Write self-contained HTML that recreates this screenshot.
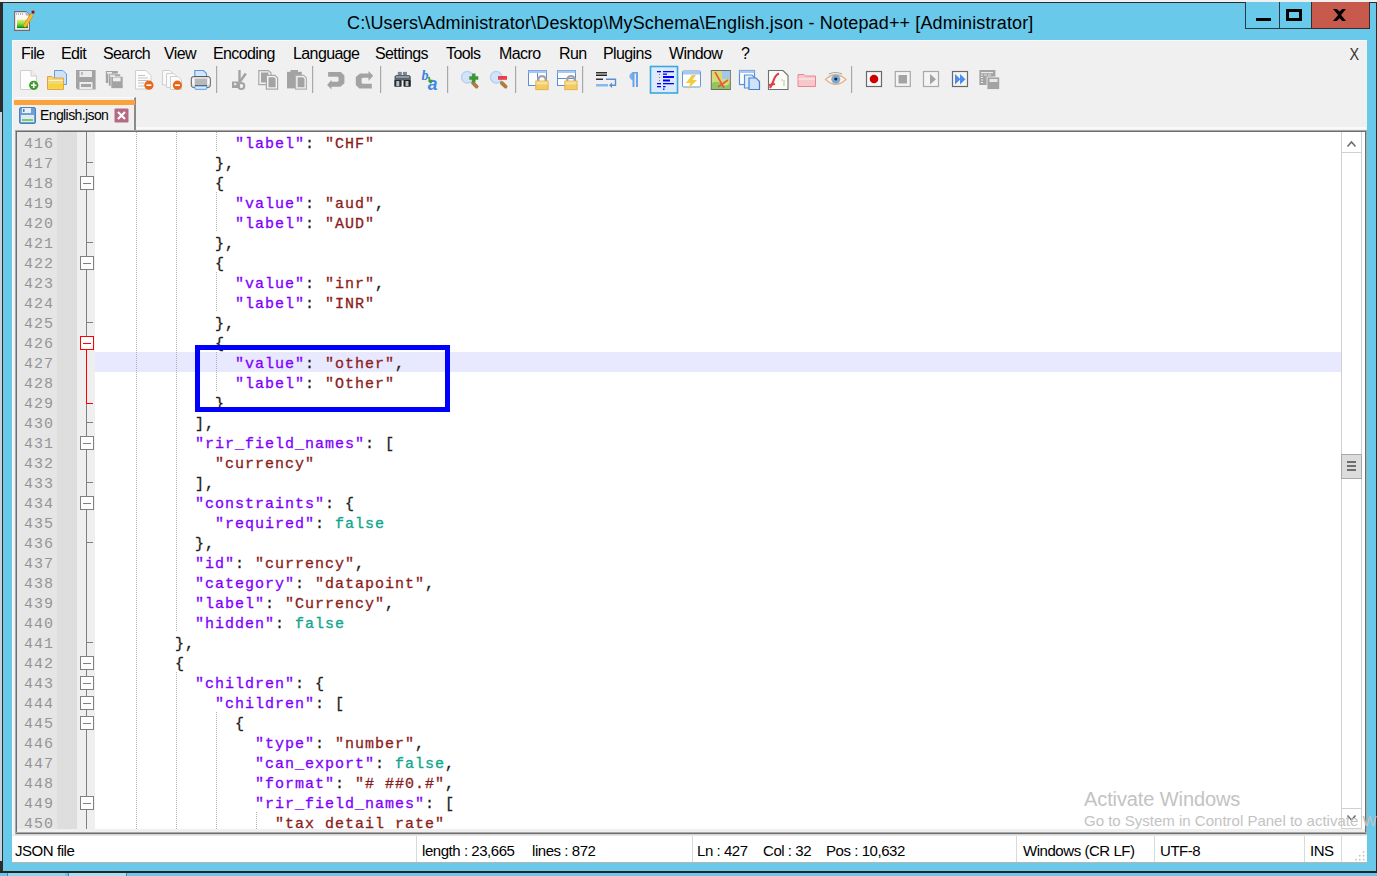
<!DOCTYPE html>
<html><head><meta charset="utf-8"><style>
*{margin:0;padding:0;box-sizing:border-box}
html,body{width:1377px;height:876px;overflow:hidden;background:#f0f0f0;position:relative;font-family:"Liberation Sans",sans-serif}
.a{position:absolute}
.t{position:absolute;white-space:nowrap;color:#000}
.mi{position:absolute;top:45px;font-size:16px;letter-spacing:-0.6px;color:#000;white-space:nowrap}
.ln{position:absolute;left:24px;height:20px;line-height:20px;font-family:"Liberation Mono",monospace;font-size:15px;letter-spacing:1px;color:#959595;padding-top:3px}
.cl{position:absolute;height:20px;line-height:20px;font-family:"Liberation Mono",monospace;font-size:15px;letter-spacing:1px;white-space:pre;color:#202020;padding-top:3px;-webkit-text-stroke:0.3px currentColor}
.k{color:#8000ff}
.s{color:#8a1c1c}
.f{color:#0ea58c}
.st{position:absolute;top:842px;font-size:15px;letter-spacing:-0.45px;color:#000;white-space:nowrap}
.sep{position:absolute;top:836px;width:1px;height:26px;background:#dadada}
.g{position:absolute;width:1px;background:repeating-linear-gradient(180deg,#b0b0b0 0 1px,transparent 1px 2px)}
</style></head><body>
<div class="a" style="left:2px;top:2px;width:1375px;height:871px;background:#68c9ea;border:1px solid #2b2b2b"></div>
<div class="a" style="left:0;top:2px;width:3px;height:110px;background:#2b2b2b"></div>
<div class="a" style="left:0;top:112px;width:2px;height:749px;background:#c9d3de"></div>
<div class="a" style="left:0;top:861px;width:3px;height:12px;background:#2b2b2b"></div>
<div class="a" style="left:0;top:871px;width:1377px;height:2px;background:#2b2424"></div>
<div class="a" style="left:2px;top:112px;width:1px;height:761px;background:#2b2b2b"></div>
<div class="a" style="left:0;top:873px;width:1377px;height:3px;background:#68c9ea"></div>
<div class="a" style="left:7px;top:873px;width:58px;height:3px;background:#8fd6ef;border-left:1px solid #3a8fb0"></div>
<div class="a" style="left:68px;top:873px;width:59px;height:3px;background:#a5e0f3;border-left:1px solid #3a8fb0;border-right:1px solid #3a8fb0"></div>
<svg class="a" style="left:12px;top:9px" width="24" height="24" viewBox="12 9 24 24">
<defs><linearGradient id="gg" x1="0" y1="0" x2="0" y2="1"><stop offset="0" stop-color="#e4ee70"/><stop offset="0.45" stop-color="#8ee048"/><stop offset="0.8" stop-color="#38b020"/><stop offset="1" stop-color="#0c6a0c"/></linearGradient></defs>
<path d="M14.6 11.6 H26 L29.4 15 V30.4 H14.6 Z" fill="#f8f8f8" stroke="#7a6868" stroke-width="1.1"/>
<path d="M26 11.6 V15 H29.4" fill="#d8d8e0" stroke="#9a9aa8" stroke-width="0.8"/>
<path d="M16.5 13 V15 M18.5 13 V15 M20.5 13 V15 M22.5 13 V15" stroke="#b0b8c8" stroke-width="1"/>
<rect x="17" y="19.7" width="11" height="8.4" fill="url(#gg)"/>
<path d="M24.4 26.6 L32 14.6" stroke="#e09010" stroke-width="3.8"/>
<path d="M24.4 26.6 L32 14.6" stroke="#f8c030" stroke-width="2"/>
<rect x="31.6" y="10.7" width="2.8" height="2.8" fill="#a00808"/>
</svg>
<div class="t" style="left:347px;top:13px;font-size:18px;letter-spacing:0.14px;color:#000">C:\Users\Administrator\Desktop\MySchema\English.json - Notepad++ [Administrator]</div>
<div class="a" style="left:1245px;top:2px;width:35px;height:27px;border:1px solid #2b3a40;border-top:none;background:#68c9ea"></div>
<div class="a" style="left:1279px;top:2px;width:33px;height:27px;border:1px solid #2b3a40;border-top:none;border-left:1px solid #2b3a40;background:#68c9ea"></div>
<div class="a" style="left:1311px;top:2px;width:59px;height:27px;border:1px solid #3a2b2b;border-top:none;background:#c75a4d"></div>
<div class="a" style="left:1256px;top:18px;width:15px;height:3px;background:#000"></div>
<div class="a" style="left:1286px;top:9px;width:16px;height:12px;border:3px solid #000"></div>
<svg class="a" style="left:1330px;top:6px" width="20" height="18" viewBox="1330 6 20 18"><path d="M1333 9 H1336.8 L1339.6 11.6 L1342.2 9 H1346 L1341.1 15 L1346 21 H1342.2 L1339.6 18.3 L1336.8 21 H1333 L1338.1 15 Z" fill="#000"/></svg>
<div class="a" style="left:12px;top:40px;width:1355px;height:822px;background:#f0f0f0;border-left:1px solid #fafafa;border-top:1px solid #f8f8f8"></div>
<span class="mi" style="left:21px">File</span>
<span class="mi" style="left:61px">Edit</span>
<span class="mi" style="left:103px">Search</span>
<span class="mi" style="left:164px">View</span>
<span class="mi" style="left:213px">Encoding</span>
<span class="mi" style="left:293px">Language</span>
<span class="mi" style="left:375px">Settings</span>
<span class="mi" style="left:446px">Tools</span>
<span class="mi" style="left:499px">Macro</span>
<span class="mi" style="left:559px">Run</span>
<span class="mi" style="left:603px">Plugins</span>
<span class="mi" style="left:669px">Window</span>
<span class="mi" style="left:741px">?</span>
<span class="mi" style="left:1349px;top:46px;letter-spacing:0;transform:scaleX(0.9);color:#333">X</span>
<svg class="a" style="left:0;top:60px" width="1010" height="36" viewBox="0 60 1010 36"><rect x="216" y="66" width="1.2" height="27" fill="#a8a8a8"/><rect x="312" y="66" width="1.2" height="27" fill="#a8a8a8"/><rect x="380" y="66" width="1.2" height="27" fill="#a8a8a8"/><rect x="447" y="66" width="1.2" height="27" fill="#a8a8a8"/><rect x="515" y="66" width="1.2" height="27" fill="#a8a8a8"/><rect x="582" y="66" width="1.2" height="27" fill="#a8a8a8"/><rect x="851" y="66" width="1.2" height="27" fill="#a8a8a8"/><path d="M20.5 70.5 H31 L36.5 76 V89.5 H20.5 Z" fill="#fdfdfd" stroke="#cfcfcf"/><path d="M31 70.5 V76 H36.5" fill="#eee" stroke="#cfcfcf"/><circle cx="33.7" cy="85.3" r="4.6" fill="#3f9a2c"/><path d="M31 85.3 H36.4 M33.7 82.6 V88" stroke="#fff" stroke-width="1.6"/><path d="M54.5 70.5 H63 L66.5 74 V84.5 H54.5 Z" fill="#cfe2fa" stroke="#5f9fe0"/><path d="M47.5 76.5 H52 L53.5 78 H63.5 V89.5 H47.5 Z" fill="#f3d675" stroke="#e3a24a"/><path d="M48.5 80.5 H63" stroke="#fff3c0" stroke-width="1"/><rect x="48.5" y="84" width="14.5" height="4.5" fill="#f6d33a"/><path d="M76 70 H95.6 V89.6 H77.5 L76 88 Z" fill="#a3a3a3"/><rect x="79.5" y="71" width="12.5" height="6" fill="#ececec"/><rect x="81.5" y="72" width="1" height="3" fill="#8a8a8a"/><rect x="79.5" y="82" width="13" height="7" fill="#ececec"/><rect x="81" y="84" width="10" height="3" fill="#a3a3a3"/><rect x="105.8" y="71" width="12" height="12" fill="#a3a3a3"/><rect x="108.5" y="74" width="12" height="12" fill="#a3a3a3" stroke="#f0f0f0" stroke-width="0.6"/><rect x="111" y="76.4" width="12" height="12" fill="#a3a3a3" stroke="#f0f0f0" stroke-width="0.6"/><rect x="107" y="72" width="5" height="1.6" fill="#eee"/><rect x="110" y="75.2" width="5" height="1.6" fill="#eee"/><rect x="113" y="77.5" width="7.6" height="3.8" fill="#eee"/><path d="M135.5 70.5 H146 L151 75.5 V89 H135.5 Z" fill="#fdfdfd" stroke="#cfcfcf"/><path d="M138 75.5 H145 M138 78 H148 M138 80.5 H148 M138 83 H144 M138 86 H144" stroke="#bdbdbd" stroke-width="0.9"/><circle cx="148.9" cy="85.2" r="4.6" fill="#e8661a"/><path d="M146.4 85.2 H151.4" stroke="#fff" stroke-width="1.6"/><path d="M162.5 70.5 H170 L173 73.5 V85 H162.5 Z" fill="#fafafa" stroke="#cfcfcf"/><path d="M166.5 73.5 H174 L177 76.5 V87.5 H166.5 Z" fill="#fafafa" stroke="#cfcfcf"/><path d="M170.5 76.5 H178 L181.5 80 V89.5 H170.5 Z" fill="#fdfdfd" stroke="#cfcfcf"/><circle cx="177.4" cy="85.2" r="4.6" fill="#e8661a"/><path d="M174.9 85.2 H179.9" stroke="#fff" stroke-width="1.6"/><path d="M194.8 70.5 H203.5 L206.5 73.5 V79 H194.8 Z" fill="#d4e6fb" stroke="#5a98e0" stroke-width="1.1"/><rect x="191.3" y="76.5" width="19" height="11" rx="2.2" fill="#dcdcdc" stroke="#5c5c5c" stroke-width="1"/><rect x="195" y="79" width="12" height="6.5" fill="#b8b8b8"/><rect x="192.2" y="78.5" width="2" height="6" fill="#fafafa"/><rect x="207.5" y="78.5" width="2" height="6" fill="#fafafa"/><path d="M195 85.5 H207" stroke="#404040" stroke-width="1"/><rect x="194.8" y="86" width="12" height="3.3" rx="0.8" fill="#dcebf8" stroke="#5a98e0" stroke-width="1"/><rect x="238.3" y="70" width="2.4" height="12" fill="#a3a3a3"/><path d="M245.8 73.5 L240 81.5" stroke="#a3a3a3" stroke-width="2.6"/><path d="M232 81.5 H238.5 L240 83 V88 H232 Z" fill="#a3a3a3"/><rect x="234" y="83.3" width="2.3" height="1.8" fill="#f0f0f0"/><circle cx="241.3" cy="86" r="3" fill="none" stroke="#a3a3a3" stroke-width="2"/><path d="M258.8 70.6 H268.5 L271 73 V84.6 H258.8 Z" fill="#f2f2f2" stroke="#a8a8a8" stroke-width="1.2"/><rect x="261" y="72.5" width="7.5" height="10" fill="#a3a3a3"/><path d="M266.4 75.4 H275 L277.6 78 V89.2 H266.4 Z" fill="#f2f2f2" stroke="#a8a8a8" stroke-width="1.2"/><path d="M268.5 77.3 H274.2 L275.6 78.8 V87.3 H268.5 Z" fill="#a3a3a3"/><rect x="287" y="71.8" width="14.8" height="16.6" fill="#a3a3a3"/><rect x="290.5" y="70" width="7.5" height="2.5" fill="#a3a3a3"/><path d="M295.6 75.4 H303.8 L306.4 78 V89.2 H295.6 Z" fill="#f2f2f2" stroke="#b0b0b0" stroke-width="1.2"/><path d="M297.6 77.3 H303 L304.5 78.8 V87.3 H297.6 Z" fill="#a3a3a3"/><path d="M328.1 71.9 H340.9 L344.4 75.5 V83.2 L340.5 86.8 H331.5 V89.6 L327.1 84.9 L331.5 79.8 V81.7 H337.7 L338.5 80.9 V77.6 L337.7 76.8 H328.1 Z" fill="#a3a3a3"/><path d="M360 73.5 H368.5 V70.9 L373.2 75.8 L368.5 80.9 V77.8 H362.6 L361.6 78.8 V82.7 L362.6 83.7 H371.8 V88.4 H359.3 L355.8 85 V77 Z" fill="#a3a3a3"/><rect x="397.8" y="71.9" width="4" height="5" fill="#7c8690"/><rect x="402.9" y="71.9" width="4" height="5" fill="#7c8690"/><path d="M394.5 76.5 L396 75 H409.3 L410.8 76.5 V80.5 H394.5 Z" fill="#5a646e"/><rect x="396" y="76" width="13" height="2" fill="#8e98a2"/><rect x="394.3" y="80" width="7.3" height="6.8" rx="0.8" fill="#262c32"/><rect x="403.5" y="80" width="7.3" height="6.8" rx="0.8" fill="#1c2228"/><rect x="396.3" y="81" width="3" height="5" fill="#b8c0c8"/><rect x="405.5" y="81" width="3" height="5" fill="#b8c0c8"/><text x="421.6" y="79.8" font-family="Liberation Serif" font-style="italic" font-weight="bold" font-size="14" fill="#3a82e0">b</text><text x="427.8" y="89.6" font-family="Liberation Sans" font-style="italic" font-weight="bold" font-size="17.5" fill="#3f88e6">a</text><path d="M428.6 76.8 L430.2 81.2" stroke="#50a848" stroke-width="2"/><path d="M427.6 80.8 L431 84 L432.6 79.6 Z" fill="#3f9a3a"/><circle cx="467.3" cy="77.2" r="5.8" fill="#d2e4f8" stroke="#b4d0f0" stroke-width="1.3"/><path d="M473 83 L476.6 86.6" stroke="#b07c40" stroke-width="3.8" stroke-linecap="round"/><path d="M473.8 73.5 V82.5 M469.3 78 H478.3" stroke="#3a9636" stroke-width="3.4"/><circle cx="496.2" cy="77.2" r="5.8" fill="#d2e4f8" stroke="#b4d0f0" stroke-width="1.3"/><path d="M501.8 83 L505.6 86.6" stroke="#b07c40" stroke-width="3.8" stroke-linecap="round"/><rect x="498" y="76" width="9" height="3.8" fill="#e8404c"/><rect x="528.5" y="70.5" width="18" height="15" fill="#fff" stroke="#5a8fd8"/><rect x="528.5" y="70.5" width="18" height="2.5" fill="#a8c8f0"/><path d="M537.5 73 V85.5" stroke="#5a8fd8"/><path d="M538.3 81.5 V79.8 A3.7 3.7 0 0 1 545.7 79.8 V81.5" fill="none" stroke="#a4a4a4" stroke-width="2.3"/><rect x="535.8" y="81" width="12.3" height="8.7" fill="#f2cc60" stroke="#e0a840" stroke-width="0.8"/><rect x="536.5" y="81.5" width="11" height="3" fill="#f8e098"/><rect x="557.5" y="70.5" width="18" height="15" fill="#fff" stroke="#5a8fd8"/><rect x="557.5" y="70.5" width="18" height="2.5" fill="#a8c8f0"/><path d="M558 78.5 H575" stroke="#5a8fd8"/><path d="M567.3 81.5 V79.8 A3.7 3.7 0 0 1 574.7 79.8 V81.5" fill="none" stroke="#a4a4a4" stroke-width="2.3"/><rect x="564.8" y="81" width="12.3" height="8.7" fill="#f2cc60" stroke="#e0a840" stroke-width="0.8"/><rect x="565.5" y="81.5" width="11" height="3" fill="#f8e098"/><rect x="596" y="72" width="11" height="1.5" fill="#333"/><rect x="596" y="74.5" width="11" height="1.5" fill="#222"/><rect x="596" y="78.5" width="7" height="1.5" fill="#333"/><rect x="596" y="84" width="12" height="2.5" fill="#8ab8ec"/><path d="M606 79.3 H615.5 V85.3 H611" fill="none" stroke="#5a8fd8" stroke-width="1.4"/><path d="M609 85.3 L612 82.5 V88 Z" fill="#5a8fd8"/><path d="M634 72.3 A4.6 4 0 0 0 634 80.3 Z" fill="#7ab0ec"/><rect x="632.5" y="72" width="2" height="15" fill="#6aa4e8"/><rect x="636" y="72" width="2" height="15" fill="#6aa4e8"/><rect x="632.5" y="72" width="5.5" height="1.6" fill="#6aa4e8"/><rect x="650.5" y="66.5" width="27" height="26.5" fill="#dcebfc" stroke="#3aa8e0" stroke-width="1.6"/><g fill="#0000ff"><rect x="657" y="71" width="4" height="1.3"/><rect x="663" y="71" width="11" height="1.3"/><rect x="663" y="73.5" width="4" height="1.3"/><rect x="663" y="76" width="11" height="2"/><rect x="663" y="79.5" width="7" height="2"/><rect x="657" y="83" width="4" height="1.3"/><rect x="663" y="83" width="11" height="1.3"/><rect x="657" y="86" width="4" height="1.3"/><rect x="663" y="86" width="2.5" height="1.3"/><rect x="663" y="88.5" width="1.5" height="1.3"/></g><g fill="#ff4040"><rect x="659" y="74" width="1" height="1"/><rect x="659" y="77" width="1" height="1"/><rect x="659" y="80" width="1" height="1"/></g><rect x="682.5" y="71" width="18" height="16" rx="1" fill="#fff" stroke="#6a98d0"/><rect x="683" y="71.5" width="17" height="3" fill="#a8c8ec"/><path d="M692 75 L686 83 H690.5 L688 89 L697 80 H692.5 L696 75 Z" fill="#f2cc40"/><rect x="711.3" y="70.5" width="19" height="19" fill="#d8dc70" stroke="#6a6a6a"/><path d="M712 83 Q717 80 722 84 T730 82 V89 H712 Z" fill="#8cc860"/><rect x="722" y="71" width="8" height="8" fill="#a0c8e8"/><path d="M715 72 L724 88 M718 87 L728 80" stroke="#e85a40" stroke-width="1.6"/><rect x="739.5" y="70.5" width="15" height="14" fill="#fff" stroke="#5a8fd8" stroke-width="1.2"/><rect x="739.5" y="70.5" width="15" height="2.5" fill="#a8c8f0"/><path d="M744.5 75 H752 L755 78 V88 H744.5 Z" fill="#e0ecfa" stroke="#5a8fd8" stroke-width="1.2"/><path d="M749 78 H756 L759.5 81.5 V89.5 H749 Z" fill="#d0e2f8" stroke="#4a80d0" stroke-width="1.2"/><path d="M768.5 70.5 H783 L788 75.5 V89.5 H768.5 Z" fill="#fdfdf8" stroke="#707070" stroke-width="1.1"/><path d="M770 88 L773 82 Q775 75 779 73.5" fill="none" stroke="#e04048" stroke-width="2.2"/><path d="M769 85 L775 84" stroke="#e04048" stroke-width="1.8"/><path d="M782 79 V81 M784 80 V86" stroke="#a0b0a0" stroke-width="0.8"/><path d="M798 74.5 H804 L805.5 76 H815.5 V86.5 H798 Z" fill="#f6c8cc" stroke="#e88890"/><path d="M798.5 79 H815" stroke="#fff0f0"/><path d="M825.5 79.5 Q835.5 70 846 79.5 Q835.5 89 825.5 79.5 Z" fill="#f4f4f4" stroke="#e8b080" stroke-width="1.2"/><circle cx="835.8" cy="79.3" r="4.5" fill="#7aaad8"/><circle cx="835.8" cy="79" r="1.6" fill="#222"/><path d="M829 74 Q835.5 71 842 74" stroke="#a0a0a0" stroke-width="1.2" fill="none"/><rect x="866.5" y="71.5" width="15" height="15" fill="#f8f8f8" stroke="#6a6a6a" stroke-width="1.2"/><circle cx="874" cy="79" r="4.3" fill="#d00000"/><rect x="895.3" y="71.5" width="15" height="15" fill="#f4f4f4" stroke="#a8a8a8" stroke-width="1.2"/><rect x="898.5" y="75" width="8.5" height="8.5" fill="#a3a3a3"/><rect x="923.5" y="71.5" width="15" height="15" fill="#f4f4f4" stroke="#a8a8a8" stroke-width="1.2"/><path d="M930 74 L936 79.2 L930 84.5 Z" fill="#a3a3a3"/><rect x="952.5" y="71.5" width="15" height="15" fill="#f4f4f4" stroke="#6a6a6a" stroke-width="1.2"/><path d="M955 74 L960.5 79.2 L955 84.5 Z M960 74 L965.5 79.2 L960 84.5 Z" fill="#4a8ee8"/><rect x="979.4" y="70" width="16" height="15" fill="#a3a3a3"/><rect x="987" y="77" width="12.7" height="12.4" fill="#a3a3a3" stroke="#f0f0f0" stroke-width="0.8"/><g fill="#e8e8e8"><rect x="981" y="72" width="12" height="1.2"/><rect x="981" y="74.5" width="2" height="1"/><rect x="984" y="74.5" width="3" height="1"/><rect x="988" y="74.5" width="3" height="1"/><rect x="981" y="77" width="2" height="1"/><rect x="981" y="79.5" width="2" height="1"/><rect x="981" y="82" width="2" height="1"/><rect x="989.5" y="79" width="8" height="3"/></g></svg>
<div class="a" style="left:14px;top:97px;width:122px;height:34px;background:#f0f0f0;border-top:1px solid #fbfbfb;border-right:2px solid #8a8a8a"></div>
<div class="a" style="left:14px;top:100px;width:121px;height:5px;background:#fca23a"></div>
<svg class="a" style="left:19px;top:107px" width="17" height="17" viewBox="0 0 17 17">
<rect x="0.5" y="0.5" width="16" height="16" rx="1.5" fill="#6ea0d8" stroke="#4a7fc0"/>
<rect x="3" y="1" width="9" height="5" fill="#e8f0fa"/>
<rect x="4" y="2" width="1.5" height="3" fill="#4a7fc0"/>
<rect x="2" y="8" width="13" height="7" fill="#dfeaf6"/>
<rect x="3" y="12" width="11" height="2" fill="#7ccc5c"/>
</svg>
<div class="t" style="left:40px;top:107px;font-size:14px;letter-spacing:-0.6px">English.json</div>
<svg class="a" style="left:114px;top:108px" width="15" height="15" viewBox="0 0 15 15"><rect x="0.5" y="0.5" width="14" height="14" fill="#b56a82" rx="1"/><path d="M4 4 L11 11 M11 4 L4 11" stroke="#fff" stroke-width="2.2"/></svg>
<div class="a" style="left:12px;top:40px;width:1px;height:822px;background:#fafafa"></div>
<div class="a" style="left:137px;top:127px;width:1229px;height:2px;background:#fafafa"></div>
<div class="a" style="left:15px;top:130px;width:1352px;height:705px;background:#a9a9a9"></div>
<div class="a" style="left:16px;top:131px;width:1350px;height:703px;background:#6d6d6d"></div>
<div class="a" style="left:17px;top:132px;width:1348px;height:701px;background:#fff"></div>
<div class="a" style="left:17px;top:132px;width:60px;height:701px;background:linear-gradient(90deg,#e7e7e7 0,#e5e5e5 40px,#dedede 40px,#dddddd 60px)"></div>
<div class="a" style="left:77px;top:132px;width:18px;height:701px;background:#efefef"></div>
<div class="a" style="left:95px;top:352px;width:1246px;height:20px;background:#e8e8ff"></div>
<div class="g" style="left:136px;top:132px;height:20px"></div>
<div class="g" style="left:176px;top:132px;height:20px"></div>
<div class="g" style="left:216px;top:132px;height:20px"></div>
<div class="g" style="left:136px;top:152px;height:20px"></div>
<div class="g" style="left:176px;top:152px;height:20px"></div>
<div class="g" style="left:136px;top:172px;height:20px"></div>
<div class="g" style="left:176px;top:172px;height:20px"></div>
<div class="g" style="left:136px;top:192px;height:20px"></div>
<div class="g" style="left:176px;top:192px;height:20px"></div>
<div class="g" style="left:216px;top:192px;height:20px"></div>
<div class="g" style="left:136px;top:212px;height:20px"></div>
<div class="g" style="left:176px;top:212px;height:20px"></div>
<div class="g" style="left:216px;top:212px;height:20px"></div>
<div class="g" style="left:136px;top:232px;height:20px"></div>
<div class="g" style="left:176px;top:232px;height:20px"></div>
<div class="g" style="left:136px;top:252px;height:20px"></div>
<div class="g" style="left:176px;top:252px;height:20px"></div>
<div class="g" style="left:136px;top:272px;height:20px"></div>
<div class="g" style="left:176px;top:272px;height:20px"></div>
<div class="g" style="left:216px;top:272px;height:20px"></div>
<div class="g" style="left:136px;top:292px;height:20px"></div>
<div class="g" style="left:176px;top:292px;height:20px"></div>
<div class="g" style="left:216px;top:292px;height:20px"></div>
<div class="g" style="left:136px;top:312px;height:20px"></div>
<div class="g" style="left:176px;top:312px;height:20px"></div>
<div class="g" style="left:136px;top:332px;height:20px"></div>
<div class="g" style="left:176px;top:332px;height:20px"></div>
<div class="g" style="left:136px;top:352px;height:20px"></div>
<div class="g" style="left:176px;top:352px;height:20px"></div>
<div class="g" style="left:216px;top:352px;height:20px"></div>
<div class="g" style="left:136px;top:372px;height:20px"></div>
<div class="g" style="left:176px;top:372px;height:20px"></div>
<div class="g" style="left:216px;top:372px;height:20px"></div>
<div class="g" style="left:136px;top:392px;height:20px"></div>
<div class="g" style="left:176px;top:392px;height:20px"></div>
<div class="g" style="left:136px;top:412px;height:20px"></div>
<div class="g" style="left:176px;top:412px;height:20px"></div>
<div class="g" style="left:136px;top:432px;height:20px"></div>
<div class="g" style="left:176px;top:432px;height:20px"></div>
<div class="g" style="left:136px;top:452px;height:20px"></div>
<div class="g" style="left:176px;top:452px;height:20px"></div>
<div class="g" style="left:136px;top:472px;height:20px"></div>
<div class="g" style="left:176px;top:472px;height:20px"></div>
<div class="g" style="left:136px;top:492px;height:20px"></div>
<div class="g" style="left:176px;top:492px;height:20px"></div>
<div class="g" style="left:136px;top:512px;height:20px"></div>
<div class="g" style="left:176px;top:512px;height:20px"></div>
<div class="g" style="left:136px;top:532px;height:20px"></div>
<div class="g" style="left:176px;top:532px;height:20px"></div>
<div class="g" style="left:136px;top:552px;height:20px"></div>
<div class="g" style="left:176px;top:552px;height:20px"></div>
<div class="g" style="left:136px;top:572px;height:20px"></div>
<div class="g" style="left:176px;top:572px;height:20px"></div>
<div class="g" style="left:136px;top:592px;height:20px"></div>
<div class="g" style="left:176px;top:592px;height:20px"></div>
<div class="g" style="left:136px;top:612px;height:20px"></div>
<div class="g" style="left:176px;top:612px;height:20px"></div>
<div class="g" style="left:136px;top:632px;height:20px"></div>
<div class="g" style="left:136px;top:652px;height:20px"></div>
<div class="g" style="left:136px;top:672px;height:20px"></div>
<div class="g" style="left:176px;top:672px;height:20px"></div>
<div class="g" style="left:136px;top:692px;height:20px"></div>
<div class="g" style="left:176px;top:692px;height:20px"></div>
<div class="g" style="left:136px;top:712px;height:20px"></div>
<div class="g" style="left:176px;top:712px;height:20px"></div>
<div class="g" style="left:216px;top:712px;height:20px"></div>
<div class="g" style="left:136px;top:732px;height:20px"></div>
<div class="g" style="left:176px;top:732px;height:20px"></div>
<div class="g" style="left:216px;top:732px;height:20px"></div>
<div class="g" style="left:136px;top:752px;height:20px"></div>
<div class="g" style="left:176px;top:752px;height:20px"></div>
<div class="g" style="left:216px;top:752px;height:20px"></div>
<div class="g" style="left:136px;top:772px;height:20px"></div>
<div class="g" style="left:176px;top:772px;height:20px"></div>
<div class="g" style="left:216px;top:772px;height:20px"></div>
<div class="g" style="left:136px;top:792px;height:20px"></div>
<div class="g" style="left:176px;top:792px;height:20px"></div>
<div class="g" style="left:216px;top:792px;height:20px"></div>
<div class="g" style="left:136px;top:812px;height:20px"></div>
<div class="g" style="left:176px;top:812px;height:20px"></div>
<div class="g" style="left:216px;top:812px;height:20px"></div>
<div class="g" style="left:256px;top:812px;height:20px"></div>
<div class="a" style="left:86px;top:132px;width:1px;height:701px;background:#808080"></div>
<div class="a" style="left:86px;top:349px;width:1px;height:55px;background:#ff0000"></div>
<div class="a" style="left:86px;top:162px;width:7px;height:1px;background:#808080"></div>
<div class="a" style="left:80px;top:176px;width:14px;height:14px;background:#fff;border:1px solid #808080"></div>
<div class="a" style="left:83px;top:183px;width:8px;height:1px;background:#808080"></div>
<div class="a" style="left:86px;top:242px;width:7px;height:1px;background:#808080"></div>
<div class="a" style="left:80px;top:256px;width:14px;height:14px;background:#fff;border:1px solid #808080"></div>
<div class="a" style="left:83px;top:263px;width:8px;height:1px;background:#808080"></div>
<div class="a" style="left:86px;top:322px;width:7px;height:1px;background:#808080"></div>
<div class="a" style="left:80px;top:336px;width:14px;height:14px;background:#fff;border:1px solid #ff0000"></div>
<div class="a" style="left:83px;top:343px;width:8px;height:1px;background:#ff0000"></div>
<div class="a" style="left:86px;top:403px;width:7px;height:1px;background:#ff0000"></div>
<div class="a" style="left:86px;top:422px;width:7px;height:1px;background:#808080"></div>
<div class="a" style="left:80px;top:436px;width:14px;height:14px;background:#fff;border:1px solid #808080"></div>
<div class="a" style="left:83px;top:443px;width:8px;height:1px;background:#808080"></div>
<div class="a" style="left:86px;top:482px;width:7px;height:1px;background:#808080"></div>
<div class="a" style="left:80px;top:496px;width:14px;height:14px;background:#fff;border:1px solid #808080"></div>
<div class="a" style="left:83px;top:503px;width:8px;height:1px;background:#808080"></div>
<div class="a" style="left:86px;top:542px;width:7px;height:1px;background:#808080"></div>
<div class="a" style="left:86px;top:642px;width:7px;height:1px;background:#808080"></div>
<div class="a" style="left:80px;top:656px;width:14px;height:14px;background:#fff;border:1px solid #808080"></div>
<div class="a" style="left:83px;top:663px;width:8px;height:1px;background:#808080"></div>
<div class="a" style="left:80px;top:676px;width:14px;height:14px;background:#fff;border:1px solid #808080"></div>
<div class="a" style="left:83px;top:683px;width:8px;height:1px;background:#808080"></div>
<div class="a" style="left:80px;top:696px;width:14px;height:14px;background:#fff;border:1px solid #808080"></div>
<div class="a" style="left:83px;top:703px;width:8px;height:1px;background:#808080"></div>
<div class="a" style="left:80px;top:716px;width:14px;height:14px;background:#fff;border:1px solid #808080"></div>
<div class="a" style="left:83px;top:723px;width:8px;height:1px;background:#808080"></div>
<div class="a" style="left:80px;top:796px;width:14px;height:14px;background:#fff;border:1px solid #808080"></div>
<div class="a" style="left:83px;top:803px;width:8px;height:1px;background:#808080"></div>
<div class="ln" style="top:132px">416</div>
<div class="cl" style="top:132px;left:235px"><span class="k">&quot;label&quot;</span>: <span class="s">&quot;CHF&quot;</span></div>
<div class="ln" style="top:152px">417</div>
<div class="cl" style="top:152px;left:215px">},</div>
<div class="ln" style="top:172px">418</div>
<div class="cl" style="top:172px;left:215px">{</div>
<div class="ln" style="top:192px">419</div>
<div class="cl" style="top:192px;left:235px"><span class="k">&quot;value&quot;</span>: <span class="s">&quot;aud&quot;</span>,</div>
<div class="ln" style="top:212px">420</div>
<div class="cl" style="top:212px;left:235px"><span class="k">&quot;label&quot;</span>: <span class="s">&quot;AUD&quot;</span></div>
<div class="ln" style="top:232px">421</div>
<div class="cl" style="top:232px;left:215px">},</div>
<div class="ln" style="top:252px">422</div>
<div class="cl" style="top:252px;left:215px">{</div>
<div class="ln" style="top:272px">423</div>
<div class="cl" style="top:272px;left:235px"><span class="k">&quot;value&quot;</span>: <span class="s">&quot;inr&quot;</span>,</div>
<div class="ln" style="top:292px">424</div>
<div class="cl" style="top:292px;left:235px"><span class="k">&quot;label&quot;</span>: <span class="s">&quot;INR&quot;</span></div>
<div class="ln" style="top:312px">425</div>
<div class="cl" style="top:312px;left:215px">},</div>
<div class="ln" style="top:332px">426</div>
<div class="cl" style="top:332px;left:215px">{</div>
<div class="ln" style="top:352px">427</div>
<div class="cl" style="top:352px;left:235px"><span class="k">&quot;value&quot;</span>: <span class="s">&quot;other&quot;</span>,</div>
<div class="ln" style="top:372px">428</div>
<div class="cl" style="top:372px;left:235px"><span class="k">&quot;label&quot;</span>: <span class="s">&quot;Other&quot;</span></div>
<div class="ln" style="top:392px">429</div>
<div class="cl" style="top:392px;left:215px">}</div>
<div class="ln" style="top:412px">430</div>
<div class="cl" style="top:412px;left:195px">],</div>
<div class="ln" style="top:432px">431</div>
<div class="cl" style="top:432px;left:195px"><span class="k">&quot;rir_field_names&quot;</span>: [</div>
<div class="ln" style="top:452px">432</div>
<div class="cl" style="top:452px;left:215px"><span class="s">&quot;currency&quot;</span></div>
<div class="ln" style="top:472px">433</div>
<div class="cl" style="top:472px;left:195px">],</div>
<div class="ln" style="top:492px">434</div>
<div class="cl" style="top:492px;left:195px"><span class="k">&quot;constraints&quot;</span>: {</div>
<div class="ln" style="top:512px">435</div>
<div class="cl" style="top:512px;left:215px"><span class="k">&quot;required&quot;</span>: <span class="f">false</span></div>
<div class="ln" style="top:532px">436</div>
<div class="cl" style="top:532px;left:195px">},</div>
<div class="ln" style="top:552px">437</div>
<div class="cl" style="top:552px;left:195px"><span class="k">&quot;id&quot;</span>: <span class="s">&quot;currency&quot;</span>,</div>
<div class="ln" style="top:572px">438</div>
<div class="cl" style="top:572px;left:195px"><span class="k">&quot;category&quot;</span>: <span class="s">&quot;datapoint&quot;</span>,</div>
<div class="ln" style="top:592px">439</div>
<div class="cl" style="top:592px;left:195px"><span class="k">&quot;label&quot;</span>: <span class="s">&quot;Currency&quot;</span>,</div>
<div class="ln" style="top:612px">440</div>
<div class="cl" style="top:612px;left:195px"><span class="k">&quot;hidden&quot;</span>: <span class="f">false</span></div>
<div class="ln" style="top:632px">441</div>
<div class="cl" style="top:632px;left:175px">},</div>
<div class="ln" style="top:652px">442</div>
<div class="cl" style="top:652px;left:175px">{</div>
<div class="ln" style="top:672px">443</div>
<div class="cl" style="top:672px;left:195px"><span class="k">&quot;children&quot;</span>: {</div>
<div class="ln" style="top:692px">444</div>
<div class="cl" style="top:692px;left:215px"><span class="k">&quot;children&quot;</span>: [</div>
<div class="ln" style="top:712px">445</div>
<div class="cl" style="top:712px;left:235px">{</div>
<div class="ln" style="top:732px">446</div>
<div class="cl" style="top:732px;left:255px"><span class="k">&quot;type&quot;</span>: <span class="s">&quot;number&quot;</span>,</div>
<div class="ln" style="top:752px">447</div>
<div class="cl" style="top:752px;left:255px"><span class="k">&quot;can_export&quot;</span>: <span class="f">false</span>,</div>
<div class="ln" style="top:772px">448</div>
<div class="cl" style="top:772px;left:255px"><span class="k">&quot;format&quot;</span>: <span class="s">&quot;# ##0.#&quot;</span>,</div>
<div class="ln" style="top:792px">449</div>
<div class="cl" style="top:792px;left:255px"><span class="k">&quot;rir_field_names&quot;</span>: [</div>
<div class="ln" style="top:812px">450</div>
<div class="cl" style="top:812px;left:275px"><span class="s">&quot;tax_detail_rate&quot;</span></div>
<div class="a" style="left:17px;top:829px;width:1348px;height:3px;background:#efefef"></div>
<div class="a" style="left:16px;top:832px;width:1350px;height:1px;background:#a9a9a9"></div>
<div class="a" style="left:15px;top:834px;width:1352px;height:1px;background:#d4d4d4"></div>
<div class="a" style="left:195px;top:345px;width:255px;height:67px;border:5px solid #0000ff"></div>
<div class="a" style="left:1341px;top:132px;width:21px;height:697px;background:#fff;border-left:1px solid #d0d0d0;border-right:1px solid #d0d0d0"></div>
<div class="a" style="left:1342px;top:152px;width:19px;height:1px;background:#d0d0d0"></div>
<div class="a" style="left:1342px;top:808px;width:19px;height:1px;background:#d0d0d0"></div>
<div class="a" style="left:1341px;top:828px;width:21px;height:1px;background:#d0d0d0"></div>
<svg class="a" style="left:1346px;top:139px" width="11" height="9" viewBox="0 0 11 9"><path d="M1.5 7.5 L5.5 3 L9.5 7.5" fill="none" stroke="#6a6a6a" stroke-width="1.5"/></svg>
<svg class="a" style="left:1346px;top:814px" width="11" height="9" viewBox="0 0 11 9"><path d="M1.5 1.5 L5.5 6 L9.5 1.5" fill="none" stroke="#6a6a6a" stroke-width="1.5"/></svg>
<div class="a" style="left:1341px;top:454px;width:21px;height:25px;background:#dcdcdc;border:1px solid #a8a8a8"></div>
<div class="a" style="left:1347px;top:461px;width:9px;height:2px;background:#6e6e6e"></div>
<div class="a" style="left:1347px;top:465px;width:9px;height:2px;background:#6e6e6e"></div>
<div class="a" style="left:1347px;top:469px;width:9px;height:2px;background:#6e6e6e"></div>
<div class="t" style="left:1084px;top:788px;font-size:20px;letter-spacing:-0.1px;color:#c3c3c3">Activate Windows</div>
<div class="t" style="left:1084px;top:812px;font-size:15px;color:#c3c3c3">Go to System in Control Panel to activate Windows.</div>
<div class="a" style="left:12px;top:835px;width:1355px;height:28px;background:#fff;border-top:1px solid #e6e6e6;border-bottom:1px solid #bdb5ad"></div>
<div class="sep" style="left:416px"></div>
<div class="sep" style="left:692px"></div>
<div class="sep" style="left:1016px"></div>
<div class="sep" style="left:1154px"></div>
<div class="sep" style="left:1304px"></div>
<div class="sep" style="left:1341px"></div>
<span class="st" style="left:15px">JSON file</span>
<span class="st" style="left:422px">length : 23,665</span>
<span class="st" style="left:532px">lines : 872</span>
<span class="st" style="left:697px">Ln : 427</span>
<span class="st" style="left:763px">Col : 32</span>
<span class="st" style="left:826px">Pos : 10,632</span>
<span class="st" style="left:1023px">Windows (CR LF)</span>
<span class="st" style="left:1160px">UTF-8</span>
<span class="st" style="left:1310px">INS</span>
<svg class="a" style="left:1350px;top:846px" width="16" height="16" viewBox="1350 846 16 16"><g fill="#bdbdbd"><rect x="1362.8" y="851.3" width="1.5" height="1.5"/><rect x="1359" y="855" width="1.5" height="1.5"/><rect x="1362.8" y="855" width="1.5" height="1.5"/><rect x="1355.3" y="858.9" width="1.5" height="1.5"/><rect x="1359" y="858.9" width="1.5" height="1.5"/><rect x="1362.8" y="858.9" width="1.5" height="1.5"/></g></svg>
</body></html>
